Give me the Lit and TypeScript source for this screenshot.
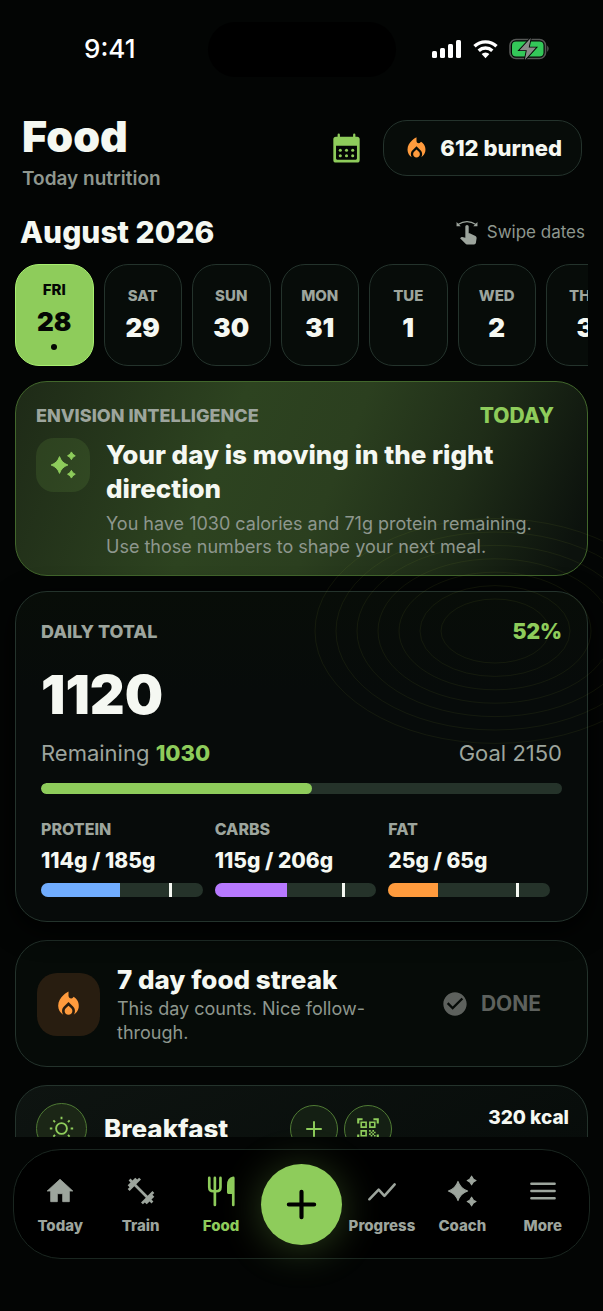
import { LitElement, html, css, svg, nothing } from "lit";
import { customElement, property } from "lit/decorators.js";
import { classMap } from "lit/directives/class-map.js";

const ICONS: Record<string, unknown> = {
  flame: svg`<path fill="currentColor" d="M16 6l-.44.55C14.38 8.02 12 7.19 12 5.3V2S4 6 4 13c0 2.92 1.56 5.47 3.89 6.86-.56-.79-.89-1.76-.89-2.8 0-1.32.52-2.56 1.47-3.5L12 10.1l3.53 3.47c.95.93 1.47 2.17 1.47 3.5 0 1.02-.31 1.96-.85 2.75 1.89-1.15 3.29-3.06 3.71-5.3.66-3.55-1.07-6.9-3.86-8.52zM12 12.9l-2.13 2.09C9.31 15.55 9 16.28 9 17.06 9 18.68 10.35 20 12 20s3-1.32 3-2.94c0-.78-.31-1.52-.87-2.07L12 12.9z"/>`,
  sparkles: svg`<g fill="currentColor" stroke="currentColor" stroke-width=".8" stroke-linejoin="round"><path d="M9 4.800q1.800 5.400 7.200 7.200q-5.400 1.800-7.200 7.200q-1.800-5.400-7.200-7.200q5.400-1.800 7.200-7.200z"/><path d="M19.200.8q.9 2.400 3.300 3.300q-2.400.9-3.300 3.300q-.9-2.400-3.300-3.300q2.400-.9 3.300-3.300z"/><path d="M19.200 16.600q.9 2.400 3.300 3.300q-2.400.9-3.300 3.300q-.9-2.400-3.300-3.300q2.400-.9 3.300-3.300z"/></g>`,
  home: svg`<path fill="currentColor" stroke="currentColor" stroke-width=".6" stroke-linejoin="round" d="M10 20v-6h4v6h5v-8h2.600L12 3.200 2.400 12H5v8z"/>`,
  dumbbell: svg`<path fill="currentColor" d="M20.570 14.860L22 13.430L20.570 12L17 15.570L8.430 7L12 3.430L10.570 2L9.140 3.430L7.710 2L5.570 4.140L4.140 2.710L2.710 4.140L4.140 5.570L2 7.710L3.430 9.140L2 10.570L3.430 12L7 8.430L15.570 17L12 20.570L13.430 22L14.860 20.570L16.290 22L18.430 19.860L19.860 21.290L21.290 19.860L19.860 18.430L22 16.290z"/>`,
  cutlery: svg`<g fill="none" stroke="currentColor" stroke-width="2" stroke-linecap="round" stroke-linejoin="round"><path d="M3.200 2.200v7q0 3 3 3h2.400q3 0 3-3v-7M7.400 2.200v20.300"/><path fill="currentColor" d="M21.200 22.500V2.200q-3.700.6-3.700 5.500v5.500h3.700"/></g>`,
  trend: svg`<path fill="none" stroke="currentColor" stroke-width="1.900" stroke-linecap="round" stroke-linejoin="round" d="M2.500 18.200l7-7.200 4.300 4.700 7.700-8.700"/>`,
  menu: svg`<path stroke="currentColor" stroke-width="1.900" stroke-linecap="round" d="M3.300 6.600h17.400M3.300 12h17.400M3.300 17.400h17.400"/>`,
  plus: svg`<path stroke="currentColor" stroke-width="1.800" stroke-linecap="round" d="M12 5.500v13M5.500 12h13"/>`,
  plusBold: svg`<path stroke="currentColor" stroke-width="3.200" stroke-linecap="round" d="M12 2.200v19.600M2.200 12h19.600"/>`,
  check: svg`<path fill="currentColor" d="M12 2C6.480 2 2 6.480 2 12s4.480 10 10 10 10-4.480 10-10S17.520 2 12 2zm-2 15l-5-5 1.410-1.410L10 14.170l7.590-7.590L19 8l-9 9z"/>`,
  scan: svg`<path fill="currentColor" d="M9.5 6.5v3h-3v-3h3M11 5H5v6h6V5zm-1.5 9.5v3h-3v-3h3M11 13H5v6h6v-6zm6.500-6.500v3h-3v-3h3M19 5h-6v6h6V5zm-6 8h1.5v1.5H13V13zm1.500 1.500H16V16h-1.500v-1.500zM16 13h1.500v1.500H16V13zm-3 3h1.500v1.500H13V16zm1.500 1.500H16V19h-1.500v-1.500zM16 16h1.500v1.500H16V16zm1.500-1.500H19V16h-1.500v-1.500zm0 3H19V19h-1.500v-1.500zM22 7h-2V4h-3V2h5v5zm0 15v-5h-2v3h-3v2h5zM2 22h5v-2H4v-3H2v5zM2 2v5h2V4h3V2H2z"/>`,
  sun: svg`<g fill="none" stroke="currentColor" stroke-width="1.800" stroke-linecap="butt"><circle cx="12" cy="12" r="5.200"/><path d="M12 .8v2.400M12 20.800v2.400M.8 12h2.400M20.800 12h2.400M4.200 4.200l1.600 1.600M18.200 18.200l1.600 1.600M4.200 19.800l1.600-1.600M18.200 5.800l1.600-1.600"/></g>`,
  calendar: svg`<path fill="currentColor" fill-rule="evenodd" d="M6 .8q.9 0 .9.900v1.500h10.200v-1.500q0-.9.900-.9t.9.900v1.500h1.300q2 0 2 2v16q0 2-2 2H3.800q-2 0-2-2v-16q0-2 2-2h1.300v-1.500q0-.9.900-.9zM3.900 10.200v10q0 .9.900.9h14.400q.9 0 .9-.9v-10z"/><g fill="currentColor"><circle cx="7.200" cy="13.700" r="1.200"/><circle cx="12" cy="13.700" r="1.200"/><circle cx="16.800" cy="13.700" r="1.200"/><circle cx="7.200" cy="18" r="1.200"/><circle cx="12" cy="18" r="1.200"/><circle cx="16.800" cy="18" r="1.200"/></g>`,
  swipe: svg`<path fill="none" stroke="currentColor" stroke-width="1.300" d="M2.200 3.800q9.800-6.400 19.600 0"/><path fill="currentColor" d="M.6 1.200v4.600h4.600zM23.400 1.200v4.600h-4.600z"/><path fill="currentColor" transform="translate(-.4 -1.800) scale(1.150)" d="M9.200 6.900a1.500 1.500 0 0 1 3.200 0v6.200l.9.100 5.500 2.600q1.300.7 1.100 2.100l-.7 4.500q-.3 1.400-1.700 1.400h-6.800q-.8 0-1.300-.6l-5.200-5.200 1-1q.4-.4 1.100-.2l2.900.6z"/>`,
};

const icon = (name: string) => html`<svg class="icon" viewBox="0 0 24 24" aria-hidden="true">${ICONS[name]}</svg>`;

const shared = css`
  * { box-sizing: border-box; }
  h1, h2, h3, p { margin: 0; }
  button { font: inherit; color: inherit; margin: 0; padding: 0; border: 0; background: none; cursor: pointer; }
  a { color: inherit; text-decoration: none; }
  .icon { display: block; width: 100%; height: 100%; overflow: visible; }
  .card { border: 1px solid var(--line); border-radius: 32px; background: var(--panel); }
  .caps { font-size: 18px; line-height: 24px; font-weight: 800; color: var(--muted); text-transform: uppercase; }
`;

@customElement("status-bar")
export class StatusBar extends LitElement {
  static styles = [shared, css`
    :host { display: grid; grid-template-columns: 1fr 188px 1fr; align-items: center; height: 98px; flex: none; color: #fff; }
    .time { text-align: center; font-size: 26px; line-height: 32px; font-weight: 500; padding-left: 12px; }
    .island { height: 55px; border-radius: 28px; background: #000; }
    .signals { display: flex; align-items: center; justify-content: flex-end; gap: 11px; padding-right: 53px; }
    .signals svg { display: block; }
  `];
  render() {
    return html`
      <div class="time">9:41</div>
      <div class="island"></div>
      <div class="signals">
        <svg width="30" height="20" viewBox="0 0 30 20" fill="#fff" aria-label="Signal">
          <rect x="0" y="12" width="5" height="7" rx="1.500"/><rect x="8" y="9" width="5" height="10" rx="1.500"/>
          <rect x="16" y="5" width="5" height="14" rx="1.500"/><rect x="24" y="1" width="5" height="18" rx="1.500"/>
        </svg>
        <svg width="25" height="20" viewBox="0 0 25 20" aria-label="Wi-Fi">
          <g fill="none" stroke="#fff" stroke-width="3.400"><path d="M1.500 7.300a16 16 0 0 1 22 0"/><path d="M5.700 11.700a10 10 0 0 1 13.600 0"/></g>
          <path fill="#fff" d="M8.600 15.100a5.800 5.800 0 0 1 7.800 0L12.500 19.200z"/>
        </svg>
        <svg width="41" height="22" viewBox="0 0 41 22" aria-label="Battery charging">
          <rect x="1" y="1.500" width="35.500" height="19" rx="6" fill="none" stroke="#565856" stroke-width="1.600"/>
          <rect x="3" y="3.500" width="31.500" height="15" rx="4" fill="#34c759"/>
          <path d="M38.300 7.500q2.500 3.200 0 6.500z" fill="#666866"/>
          <path d="M21.800 0L10.500 12.200h7.300L15.800 22 27 9.600h-7.300z" fill="#8a8c8a" stroke="#030504" stroke-width="1.800" paint-order="stroke"/>
        </svg>
      </div>`;
  }
}

@customElement("date-strip")
export class DateStrip extends LitElement {
  static styles = [shared, css`
    :host { display: grid; grid-auto-flow: column; grid-auto-columns: 13.7%; gap: 10px; overflow-x: auto; scrollbar-width: none; }
    .day { display: flex; flex-direction: column; align-items: center; justify-content: center; height: 102px; border: 1px solid var(--line); border-radius: 24px; background: var(--panel); }
    .name { font-size: 15px; line-height: 20px; font-weight: 800; color: var(--muted); }
    .num { font-size: 26px; line-height: 34px; font-weight: 900; margin-top: 5px; }
    .dot { width: 6px; height: 6px; border-radius: 3px; background: #040704; margin-top: 5px; }
    .on { background: var(--green); border-color: #a8ef70; color: #040704; }
    .on .name { color: #040704; }
  `];
  render() {
    const days: [string, number][] = [["Fri", 28], ["Sat", 29], ["Sun", 30], ["Mon", 31], ["Tue", 1], ["Wed", 2], ["Thu", 3]];
    return days.map(([name, num], i) => html`
      <button class=${classMap({ day: true, on: i === 0 })} aria-pressed=${i === 0}>
        <span class="name">${name.toUpperCase()}</span><span class="num">${num}</span>
        ${i === 0 ? html`<span class="dot"></span>` : nothing}
      </button>`);
  }
}

@customElement("insight-card")
export class InsightCard extends LitElement {
  static styles = [shared, css`
    :host { display: block; }
    .card { padding: 20px 33px 17px 20px; border-color: #42672c; background: linear-gradient(112deg, #1e2a17 0%, #2d4320 36%, #2b3f1f 55%, #1f2d18 75%, #0c120d 96%); }
    .top { display: flex; justify-content: space-between; align-items: center; line-height: 28px; }
    .tag { font-size: 21px; font-weight: 800; color: var(--green); }
    .body { display: grid; grid-template-columns: 54px 1fr; gap: 16px; padding-top: 8px; }
    .badge { width: 54px; height: 54px; padding: 13px; border-radius: 18px; background: rgba(142, 204, 91, .12); color: var(--green); }
    h2 { font-size: 26px; line-height: 34px; font-weight: 800; }
    p { font-size: 18px; line-height: 23px; color: var(--soft); margin-top: 6px; }
  `];
  render() {
    return html`<section class="card">
      <div class="top"><span class="caps">Envision Intelligence</span><span class="tag">TODAY</span></div>
      <div class="body">
        <div class="badge">${icon("sparkles")}</div>
        <div><h2>Your day is moving in the right direction</h2>
          <p>You have 1030 calories and 71g protein remaining. Use those numbers to shape your next meal.</p></div>
      </div>
    </section>`;
  }
}

@customElement("daily-card")
export class DailyCard extends LitElement {
  static styles = [shared, css`
    :host { display: block; position: relative; }
    .card { padding: 26px 25px 24px; background: linear-gradient(180deg, #080d08, #070b0a 30%); box-shadow: 0 8px 28px #000; }
    .row { display: flex; justify-content: space-between; align-items: center; line-height: 28px; }
    .pct { font-size: 21px; font-weight: 900; color: var(--green); }
    .total { font-size: 54px; line-height: 60px; font-weight: 900; margin-top: 19px; }
    .meta { font-size: 22px; color: var(--muted); margin-top: 14px; }
    .meta b { font-weight: 800; color: var(--green); }
    .track { position: relative; overflow: hidden; height: 11px; border-radius: 7px; background: var(--track); }
    .main { margin-top: 16px; }
    .fill { height: 100%; background: var(--green); }
    .main .fill { border-radius: 6px; }
    .blue { background: #70adff; }
    .violet { background: #b779ff; }
    .orange { background: #ff9b3d; }
    .mark { position: absolute; top: 0; bottom: 0; left: 79%; width: 3px; background: var(--text); }
    .macros { display: grid; grid-template-columns: repeat(3, 1fr); margin-top: 25px; }
    .macro { padding-right: 12px; }
    .macro .track { height: 14px; margin-top: 9px; }
    .name { font-size: 16px; line-height: 20px; font-weight: 800; color: var(--muted); }
    .value { font-size: 21px; line-height: 26px; font-weight: 800; margin-top: 9px; }
    .rings { position: absolute; top: -74px; right: -88px; width: 362px; height: 228px; pointer-events: none; }
  `];
  render() {
    const macros = [
      { name: "PROTEIN", value: "114g / 185g", pct: 49, tone: "blue" },
      { name: "CARBS", value: "115g / 206g", pct: 45, tone: "violet" },
      { name: "FAT", value: "25g / 65g", pct: 31, tone: "orange" },
    ];
    return html`<section class="card">
      <div class="row"><span class="caps">Daily total</span><span class="pct">52%</span></div>
      <div class="total">1120</div>
      <div class="row meta"><span>Remaining <b>1030</b></span><span>Goal 2150</span></div>
      <div class="track main" role="progressbar" aria-label="Calories" aria-valuenow="52"><div class="fill" style="width:52%"></div></div>
      <div class="macros">${macros.map((m) => html`
        <div class="macro"><div class="name">${m.name}</div><div class="value">${m.value}</div>
          <div class="track" role="progressbar" aria-label=${m.name} aria-valuenow=${m.pct}>
            <div class="fill ${m.tone}" style="width:${m.pct}%"></div><div class="mark"></div></div></div>`)}
      </div>
    </section>
    <svg class="rings" viewBox="0 0 362 228" fill="none" stroke="#8aa030" stroke-opacity=".1" aria-hidden="true">
      ${[0, 1, 2, 3, 4, 5, 6].map((i) => svg`<ellipse cx="181" cy="114" rx=${54 + i * 21} ry=${32 + i * 13.4}/>`)}
    </svg>`;
  }
}

@customElement("streak-card")
export class StreakCard extends LitElement {
  static styles = [shared, css`
    :host { display: block; }
    .card { display: grid; grid-template-columns: 63px 1fr auto; align-items: center; gap: 17px; padding: 22px 46px 21px 21px; background: #060b08; }
    .badge { width: 63px; height: 63px; padding: 16px; border-radius: 20px; background: #281d10; color: var(--orange); }
    .copy { padding-right: 48px; }
    h2 { font-size: 26px; line-height: 34px; font-weight: 800; }
    p { font-size: 18px; line-height: 24px; color: var(--soft); }
    .done { display: flex; align-items: center; gap: 12px; color: #5d615d; font-size: 21px; line-height: 28px; font-weight: 700; }
    .done span { width: 28px; height: 28px; }
  `];
  render() {
    return html`<section class="card">
      <div class="badge">${icon("flame")}</div>
      <div class="copy"><h2>7 day food streak</h2><p>This day counts. Nice follow-through.</p></div>
      <button class="done" disabled><span>${icon("check")}</span>DONE</button>
    </section>`;
  }
}

@customElement("meal-card")
export class MealCard extends LitElement {
  @property() name = "";
  @property() kcal = "";
  static styles = [shared, css`
    :host { display: block; }
    .card { display: grid; grid-template-columns: 51px 1fr auto 160px; align-items: center; gap: 17px; padding: 17px 18px 112px 20px; background: linear-gradient(150deg, #0e1411, #070c0a 80%); }
    .round { width: 48px; height: 48px; padding: 10px; border: 1px solid #4f7a34; border-radius: 50%; background: #141f13; color: var(--green); }
    .meal { width: 51px; height: 51px; padding: 12px; background: #1b2616; }
    h2 { font-size: 26px; line-height: 34px; font-weight: 800; }
    .tools { display: flex; gap: 6px; }
    .kcal { text-align: right; font-size: 19px; line-height: 24px; font-weight: 800; padding-bottom: 22px; }
  `];
  render() {
    return html`<section class="card">
      <div class="round meal">${icon("sun")}</div>
      <h2>${this.name}</h2>
      <div class="tools"><button class="round" aria-label="Add food">${icon("plus")}</button><button class="round" aria-label="Scan code">${icon("scan")}</button></div>
      <div class="kcal">${this.kcal}</div>
    </section>`;
  }
}

@customElement("tab-bar")
export class TabBar extends LitElement {
  static styles = [shared, css`
    :host { display: block; flex: none; padding: 12px 13px 52px; }
    nav { display: grid; grid-template-columns: repeat(7, minmax(0, 1fr)); align-items: center; height: 110px; padding: 0 6px; border: 1px solid #1a2620; border-radius: 48px; background: #000; }
    .tab { display: flex; flex-direction: column; align-items: center; gap: 9px; padding-top: 2px; color: var(--muted); font-size: 15px; line-height: 20px; font-weight: 800; }
    .tab .glyph { width: 32px; height: 32px; }
    .on { color: var(--green); }
    .fab { justify-self: center; width: 81px; height: 81px; padding: 25px; border-radius: 50%; background: var(--green); color: #000; box-shadow: 0 4px 40px rgba(142, 204, 91, .3); }
  `];
  tab(name: string, glyph: string, on = false) {
    return html`<a href="#${name.toLowerCase()}" class=${classMap({ tab: true, on })}><span class="glyph">${icon(glyph)}</span>${name}</a>`;
  }
  render() {
    return html`<nav aria-label="Main">
      ${this.tab("Today", "home")}${this.tab("Train", "dumbbell")}${this.tab("Food", "cutlery", true)}
      <button class="fab" aria-label="Add">${icon("plusBold")}</button>
      ${this.tab("Progress", "trend")}${this.tab("Coach", "sparkles")}${this.tab("More", "menu")}
    </nav>`;
  }
}

@customElement("app-root")
export class AppRoot extends LitElement {
  static styles = [shared, css`
    :host {
      --text: #f5f8f2; --muted: #9da59d; --soft: #8e978e; --green: #8ecc5b; --orange: #ff9b3d;
      --line: #24332c; --panel: #070c09; --track: #25332a;
      display: flex; flex-direction: column; height: 100vh; overflow: hidden;
      background: #030504; color: var(--text);
      font-family: Inter, "Liberation Sans", sans-serif;
      font-optical-sizing: none;
    }
    main { flex: 1; min-height: 0; overflow: hidden auto; scrollbar-width: none; padding: 14px 15px 0; }
    header { display: flex; align-items: flex-start; justify-content: space-between; padding: 0 6px 0 7px; }
    h1 { font-size: 43px; line-height: 48px; font-weight: 900; }
    .sub { font-size: 19px; line-height: 24px; font-weight: 600; color: #8f978f; margin-top: 7px; }
    .actions { display: flex; align-items: center; gap: 21px; padding-top: 8px; }
    .cal { width: 31px; height: 32px; color: var(--green); }
    .burned { display: flex; align-items: center; gap: 10px; height: 56px; padding: 0 19px; border: 1px solid var(--line); border-radius: 24px; background: var(--panel); font-size: 22px; line-height: 28px; font-weight: 800; }
    .burned span { width: 27px; height: 27px; color: var(--orange); }
    .month { display: flex; align-items: center; justify-content: space-between; padding: 0 3px 0 5px; margin: 24px 0 15px; }
    .month h2 { font-size: 30px; line-height: 34px; font-weight: 800; }
    .hint { display: flex; align-items: center; gap: 9px; font-size: 17px; line-height: 24px; color: var(--soft); }
    .hint span { width: 22px; height: 24px; color: var(--muted); }
    .stack { display: flex; flex-direction: column; padding-top: 15px; gap: 15px; }
    .lower { display: flex; flex-direction: column; gap: 18px; }
  `];
  render() {
    return html`
      <status-bar></status-bar>
      <main>
        <header>
          <div><h1>Food</h1><p class="sub">Today nutrition</p></div>
          <div class="actions">
            <button class="cal" aria-label="Calendar">${icon("calendar")}</button>
            <button class="burned"><span>${icon("flame")}</span>612 burned</button>
          </div>
        </header>
        <div class="month"><h2>August 2026</h2><div class="hint"><span>${icon("swipe")}</span>Swipe dates</div></div>
        <date-strip></date-strip>
        <div class="stack">
          <insight-card></insight-card>
          <div class="lower">
            <daily-card></daily-card>
            <streak-card></streak-card>
            <meal-card name="Breakfast" kcal="320 kcal"></meal-card>
          </div>
        </div>
      </main>
      <tab-bar></tab-bar>`;
  }
}
